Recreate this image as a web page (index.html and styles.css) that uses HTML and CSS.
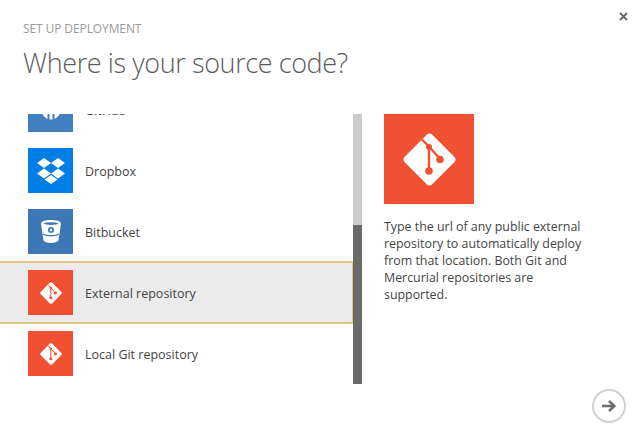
FILE: index.html
```html
<!DOCTYPE html>
<html lang="en">
<head>
<meta charset="utf-8">
<title>Set up deployment</title>
<link rel="stylesheet" href="styles.css">
</head>
<body>
<svg class="defs" width="0" height="0" aria-hidden="true">
  <symbol id="git" viewBox="0 0 53 53">
    <path d="M24 1.500 Q26.500 -0.500 29 1.500 L51.500 24 Q53.500 26.500 51.500 29 L29 51.500 Q26.500 53.500 24 51.500 L1.500 29 Q-0.500 26.500 1.500 24 Z" fill="#fff"/>
    <path d="M19 6.500 L26 13.500 L26 37 M26 13.500 L37 26" fill="none" stroke="#f05133" stroke-width="2.400"/>
    <circle cx="26" cy="14" r="3" fill="#f05133"/>
    <circle cx="37" cy="26.500" r="3.800" fill="#f05133"/>
    <circle cx="26" cy="38" r="3.800" fill="#f05133"/>
  </symbol>
</svg>
<main class="dialog">
  <header class="head">
    <div>
      <p class="eyebrow">SET UP DEPLOYMENT</p>
      <h1 class="title">Where is your source code?</h1>
    </div>
    <button class="close" aria-label="Close">
      <svg width="9" height="9" viewBox="0 0 9 9"><path d="M1 1 L8 8 M8 1 L1 8" stroke="#666" stroke-width="1.800"/></svg>
    </button>
  </header>
  <section class="body">
    <div class="picker">
      <ul class="list">
        <li class="row">
          <span class="tile tile-github">
            <svg width="24" height="24" viewBox="0 0 24 24"><circle cx="12" cy="12" r="9.500" fill="#fff"/><path d="M8.500 22 V14 H10.500 V22 Z M13.500 22 V14 H15.500 V22 Z" fill="#4280bf"/></svg>
          </span>
          <span class="label">GitHub</span>
        </li>
        <li class="row">
          <span class="tile tile-dropbox">
            <svg width="28" height="26" viewBox="0 0 28 26"><path d="M7 0 L14 5 L7 10 L0 5 Z M21 0 L28 5 L21 10 L14 5 Z M7 10.500 L14 15.500 L7 20.500 L0 15.500 Z M21 10.500 L28 15.500 L21 20.500 L14 15.500 Z M14 17 L20.500 21.500 L14 26 L7.500 21.500 Z" fill="#fff"/></svg>
          </span>
          <span class="label">Dropbox</span>
        </li>
        <li class="row">
          <span class="tile tile-bitbucket">
            <svg width="20" height="23" viewBox="0 0 20 23"><path d="M10 0 C15 0 20 1 20 3.500 L17.500 20 C17 22 13 23 10 23 C7 23 3 22 2.500 20 L0 3.500 C0 1 5 0 10 0 Z" fill="#fff"/><ellipse cx="10" cy="3.600" rx="7" ry="1.400" fill="#3e77b5"/><path d="M2 13.500 C6 15.500 14 15.500 18 13.500 L18 14.800 C14 16.800 6 16.800 2 14.800 Z" fill="#3e77b5"/><circle cx="10" cy="10" r="3" fill="#3e77b5"/><circle cx="10" cy="10" r="1.300" fill="#fff"/></svg>
          </span>
          <span class="label">Bitbucket</span>
        </li>
        <li class="row selected">
          <span class="tile tile-git"><svg width="22" height="22"><use href="#git"/></svg></span>
          <span class="label">External repository</span>
        </li>
        <li class="row">
          <span class="tile tile-git"><svg width="22" height="22"><use href="#git"/></svg></span>
          <span class="label">Local Git repository</span>
        </li>
      </ul>
      <div class="scrollbar"><div class="thumb"></div></div>
    </div>
    <aside class="detail">
      <span class="detail-tile"><svg width="53" height="53"><use href="#git"/></svg></span>
      <p class="detail-text">Type the url of any public external repository to automatically deploy from that location. Both Git and Mercurial repositories are supported.</p>
    </aside>
  </section>
  <footer class="foot">
    <button class="next" aria-label="Next">
      <svg width="16" height="14" viewBox="0 0 16 14"><path d="M1 7 H13 M8 2 L13.500 7 L8 12" fill="none" stroke="#6e6e6e" stroke-width="2.400"/></svg>
    </button>
  </footer>
</main>
</body>
</html>
```
FILE: styles.css
```css
* { box-sizing: border-box; }
html, body { margin: 0; padding: 0; background: #fff; }
body { width: 637px; height: 441px; overflow: hidden; font-family: "Open Sans", "Noto Sans", "Liberation Sans", sans-serif; color: #444; }
.defs { display: block; height: 0; }
.dialog { display: flex; flex-direction: column; height: 441px; }
.head { display: flex; justify-content: space-between; align-items: flex-start; height: 114px; padding: 22px 8px 0 23px; }
.eyebrow { margin: 0; font-size: 12px; line-height: 14px; font-weight: 400; color: #9a9a9a; letter-spacing: -0.1px; }
.title { margin: 8px 0 0; font-size: 27px; line-height: 38px; font-weight: 300; color: #5c5c5c; letter-spacing: -0.4px; }
.close { border: 0; background: none; padding: 0; width: 11px; height: 11px; margin-top: -11px; display: flex; align-items: center; justify-content: center; }
.body { display: flex; height: 270px; }
.picker { display: flex; width: 362px; height: 270px; flex: none; }
.list { list-style: none; margin: 0; padding: 0; width: 353px; height: 270px; overflow: hidden; display: flex; flex-direction: column; }
.row { flex: none; display: flex; align-items: center; gap: 12px; height: 61px; padding-left: 28px; }
.row:first-child { margin-top: -35px; }
.selected { height: 63px; margin: -1px 0; background: #ebebeb; border-top: 2px solid #e2c57f; border-bottom: 2px solid #e2c57f; border-right: 1px solid #e2c57f; position: relative; }
.tile { width: 45px; height: 45px; flex: none; display: flex; align-items: center; justify-content: center; }
.tile-github { background: #4280bf; }
.tile-dropbox { background: #007ee5; }
.tile-bitbucket { background: #3e77b5; }
.tile-git { background: #f05133; }
.label { font-size: 12.5px; color: #444; padding-top: 2px; }
.scrollbar { width: 9px; height: 270px; background: #cbcbcb; display: flex; flex-direction: column; justify-content: flex-end; }
.thumb { height: 159px; background: #6a6a6a; }
.detail { width: 206px; margin-left: 22px; }
.detail-tile { width: 90px; height: 90px; background: #f05133; display: flex; align-items: center; justify-content: center; }
.detail-text { margin: 14px 0 0; font-size: 12.4px; line-height: 17px; color: #444; }
.foot { display: flex; justify-content: flex-end; padding: 5px 11px 0 0; }
.next { width: 34px; height: 34px; border: 2px solid #d2d2d2; border-radius: 50%; background: #fff; padding: 0; display: flex; align-items: center; justify-content: center; }
```
